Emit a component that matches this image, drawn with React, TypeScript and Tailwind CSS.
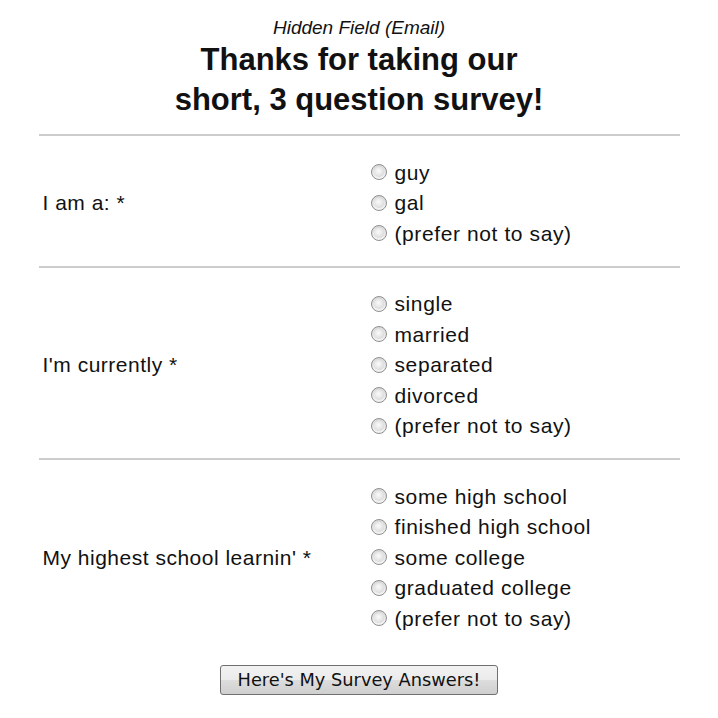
import { useState } from "react";

type Question = {
  id: string;
  label: string;
  options: string[];
};

const questions: Question[] = [
  { id: "gender", label: "I am a: *", options: ["guy", "gal", "(prefer not to say)"] },
  {
    id: "status",
    label: "I'm currently *",
    options: ["single", "married", "separated", "divorced", "(prefer not to say)"],
  },
  {
    id: "school",
    label: "My highest school learnin' *",
    options: ["some high school", "finished high school", "some college", "graduated college", "(prefer not to say)"],
  },
];

function Radio({ checked }: { checked: boolean }): JSX.Element {
  return (
    <span className="flex h-[16px] w-[16px] shrink-0 items-center justify-center rounded-full border border-[#8e8f8f] bg-[linear-gradient(#d8d8d8,#f4f4f4)]">
      <span className="h-[10px] w-[10px] rounded-full bg-[radial-gradient(circle_at_45%_40%,#fbfbfb_0%,#e4e4e4_55%,#c9c9c9_100%)]">
        {checked ? <span className="m-[2px] block h-[6px] w-[6px] rounded-full bg-[#1f4f8f]" /> : null}
      </span>
    </span>
  );
}

export default function App(): JSX.Element {
  const [answers, setAnswers] = useState<Record<string, string>>({});

  return (
    <div className="min-h-[718px] bg-white text-[#111] [font-family:'Liberation_Sans',Arial,sans-serif]">
      <div className="mx-auto w-[641px]">
        <p className="pt-[16px] text-center text-[19px] leading-[24px] italic">Hidden Field (Email)</p>
        <h1 className="mb-[14px] text-center text-[31px] font-bold leading-[40px]">
          Thanks for taking our
          <br />
          short, 3 question survey!
        </h1>

        {questions.map((question) => (
          <div key={question.id} className="border-t-2 border-[#cccccc]">
            <div className="grid grid-cols-[332px_1fr] items-center pt-[21px] pb-[17px]">
              <span className="pl-[4px] text-[21px] tracking-[0.5px]">{question.label}</span>
              <div className="flex flex-col">
                {question.options.map((option) => (
                  <label
                    key={option}
                    className="flex h-[30.5px] cursor-default items-center gap-[8px] text-[21px] tracking-[0.6px]"
                    onClick={() => setAnswers((previous) => ({ ...previous, [question.id]: option }))}
                  >
                    <Radio checked={answers[question.id] === option} />
                    <span>{option}</span>
                  </label>
                ))}
              </div>
            </div>
          </div>
        ))}

        <div className="flex justify-center pt-[14px]">
          <button
            className="h-[30px] w-[278px] rounded-[3px] border border-[#707070] bg-[linear-gradient(#f2f2f2_0%,#ebebeb_50%,#dddddd_50%,#cfcfcf_100%)] text-[17.8px] leading-none text-[#111] [font-family:'DejaVu_Sans',Verdana,sans-serif]"
            type="button"
          >
            Here's My Survey Answers!
          </button>
        </div>
      </div>
    </div>
  );
}
